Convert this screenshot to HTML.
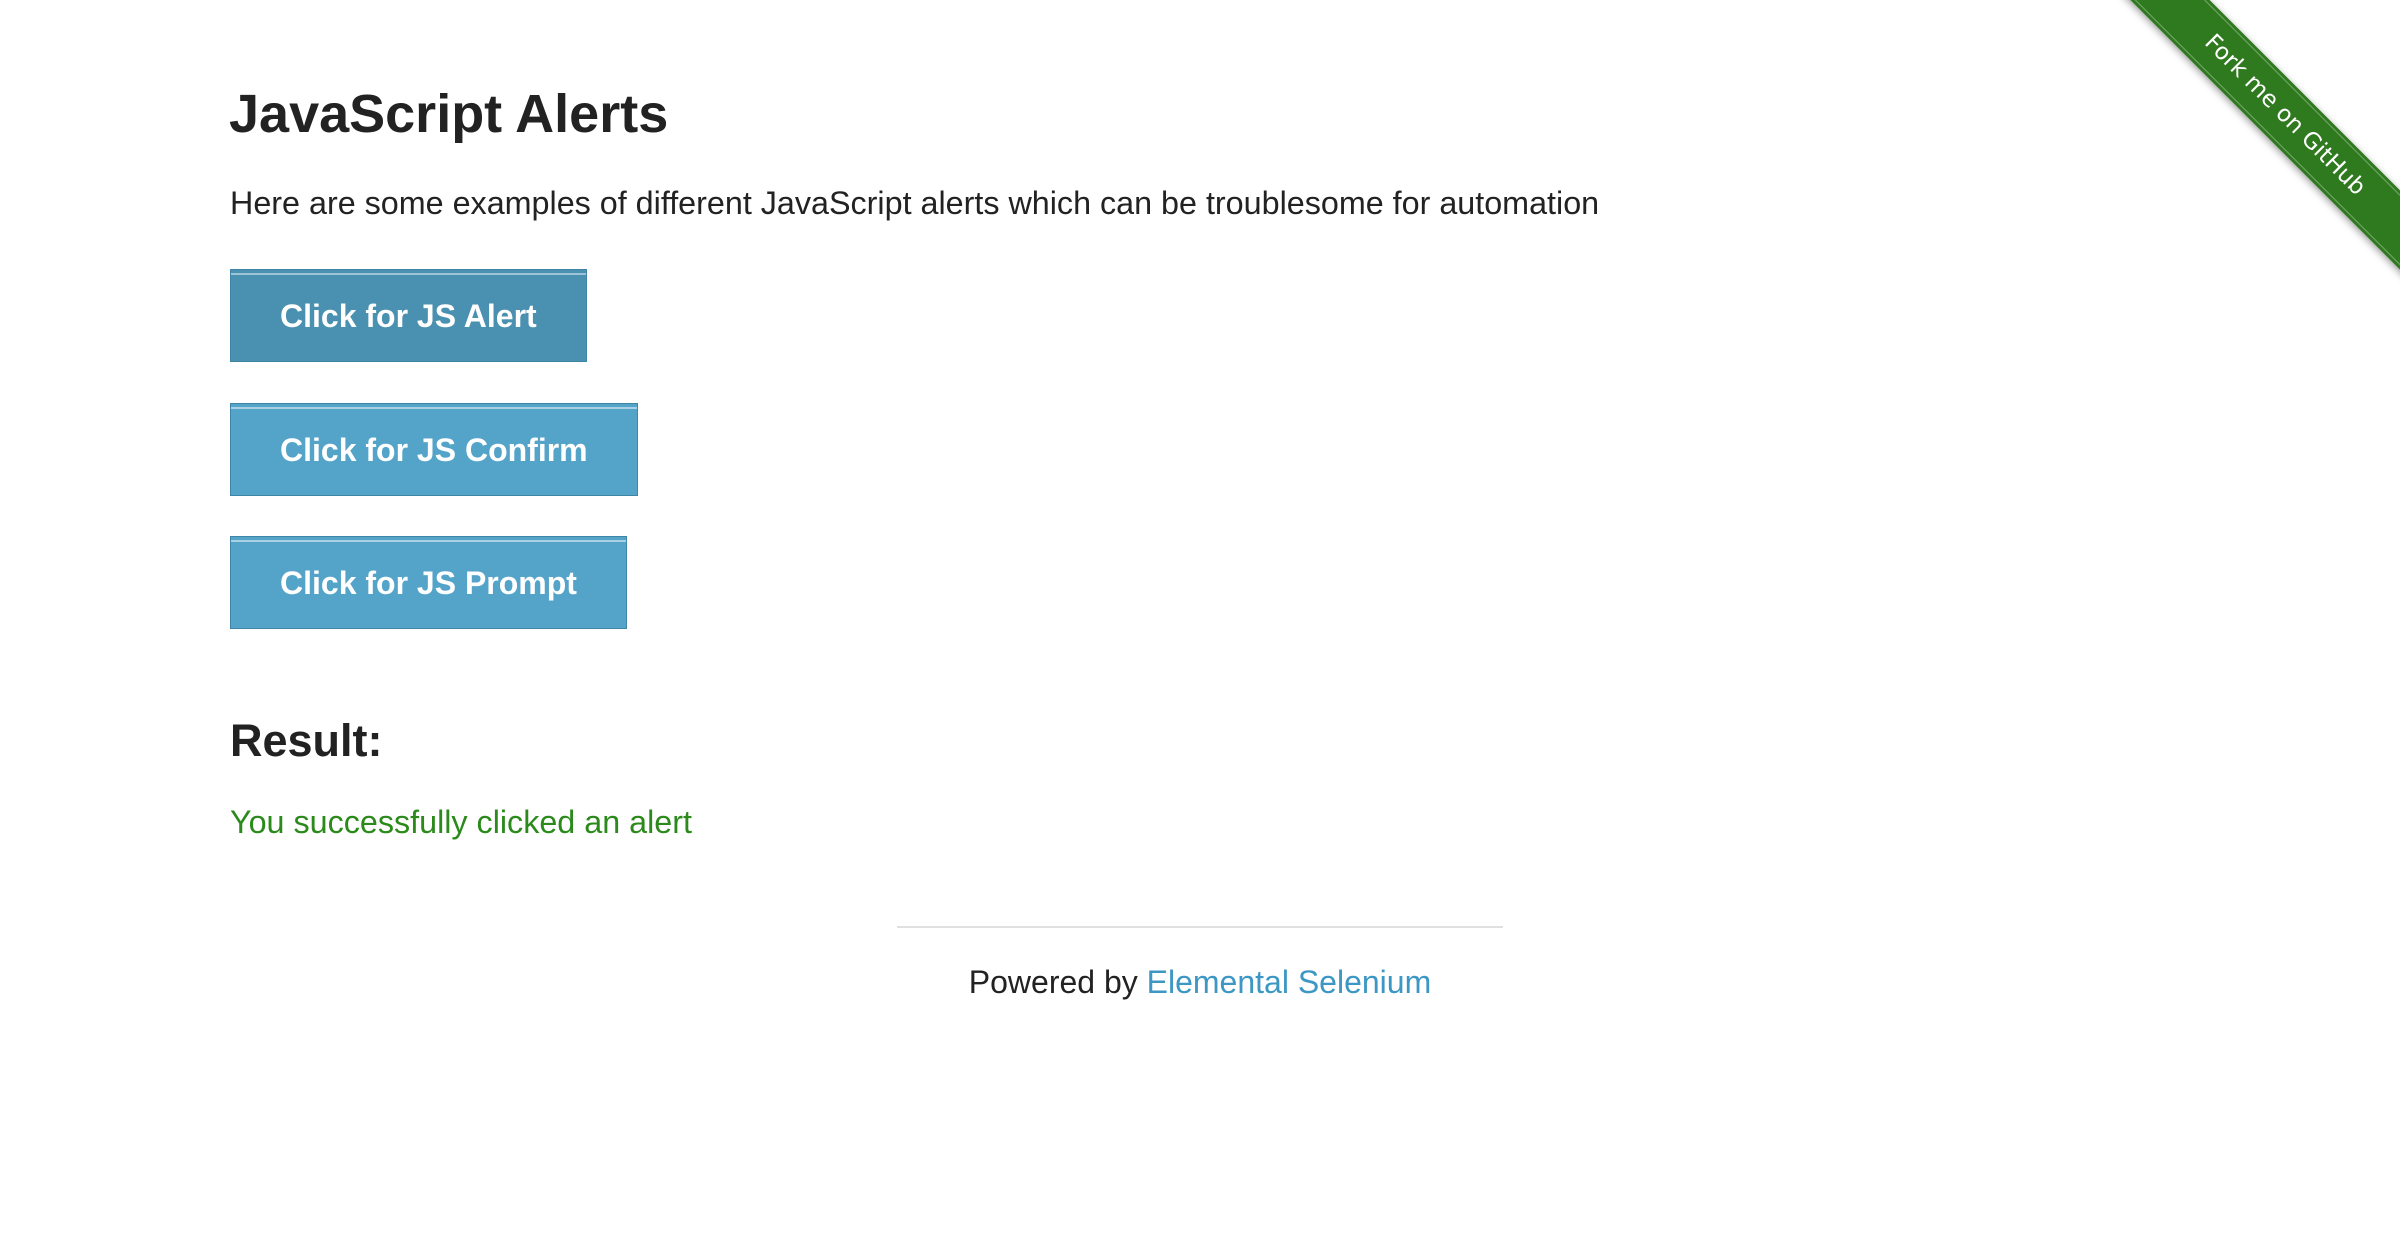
<!DOCTYPE html>
<html><head><meta charset="utf-8"><style>
html,body{margin:0;padding:0;width:2400px;height:1252px;overflow:hidden;background:#fff;font-family:"Liberation Sans",Arial,sans-serif;color:#222;position:relative}
.t{position:absolute;line-height:1;white-space:nowrap;margin:0}
.btn{position:absolute;left:230px;height:93px;background:#54a4c9;border:1px solid #3f85a6;box-sizing:border-box;color:#fff;font-weight:bold;font-size:32px;line-height:93px;padding-left:49px;box-shadow:inset 0 3px 0 #54a4c9,inset 0 5px 0 #a9d0e3}
.rib{position:absolute;left:2035px;top:87px;width:500px;height:56px;background:#2f7a1f;transform:rotate(45deg);color:#fff;font-family:"DejaVu Sans",sans-serif;font-size:23px;text-align:center;line-height:56px;box-shadow:0 2px 8px rgba(0,0,0,.4);outline:1px solid rgba(255,255,255,.35);outline-offset:-4px}
</style></head><body>
<div class="t" style="left:229px;top:87px;font-size:54px;font-weight:bold;color:#222">JavaScript Alerts</div>
<div class="t" style="left:230px;top:187px;font-size:32.3px">Here are some examples of different JavaScript alerts which can be troublesome for automation</div>
<div class="btn" style="top:269px;width:357px;background:#4a90b0;box-shadow:inset 0 3px 0 #4a90b0,inset 0 5px 0 #9cc3d6">Click for JS Alert</div>
<div class="btn" style="top:403px;width:408px">Click for JS Confirm</div>
<div class="btn" style="top:536px;width:397px">Click for JS Prompt</div>
<div class="t" style="left:230px;top:718px;font-size:45px;font-weight:bold">Result:</div>
<div class="t" style="left:230px;top:806px;font-size:32.3px;color:#2b8a1b">You successfully clicked an alert</div>
<div style="position:absolute;left:897px;top:926px;width:606px;height:2px;background:#e0e0e0"></div>
<div class="t" style="left:0;width:2400px;text-align:center;top:966px;font-size:32px">Powered by <span style="color:#3d97c4">Elemental Selenium</span></div>
<div class="rib">Fork me on GitHub</div>
</body></html>
